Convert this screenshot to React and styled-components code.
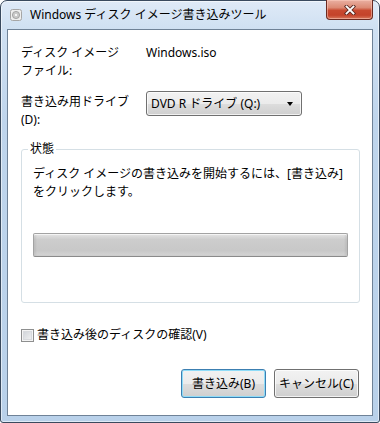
import React from 'react';
import styled, { createGlobalStyle } from 'styled-components';

const GlobalStyle = createGlobalStyle`
    html, body {
        margin: 0;
        padding: 0;
        background: #ffffff;
    }
    body {
        font-family: "Noto Sans", "Noto Sans CJK JP", sans-serif;
        font-size: 12px;
        color: #000000;
    }
`

const Window = styled.div`
    width: 380px;
    height: 423px;
    box-sizing: border-box;
    display: flex;
    flex-direction: column;
    padding: 0 6px 6px 6px;
    border: 1px solid #3a4a5e;
    border-radius: 7px 7px 3px 3px;
    background: linear-gradient(to bottom, #dfeaf7 0px, #cfe0f2 28px, #bfd5ec 120px, #b9d1ea 100%);
    box-shadow: inset 0 0 0 1px rgba(255, 255, 255, 0.55);
`

const TitleBar = styled.div`
    height: 28px;
    flex-shrink: 0;
    display: flex;
    align-items: center;
`

const TitleIcon = styled.svg`
    margin-left: 3px;
    margin-right: 8px;
    flex-shrink: 0;
`

const TitleText = styled.span`
    font-size: 12px;
    line-height: 1;
    color: #000000;
    white-space: nowrap;
`

const CloseButton = styled.div`
    margin-left: auto;
    margin-top: -1px;
    align-self: flex-start;
    width: 47px;
    height: 20px;
    box-sizing: border-box;
    display: flex;
    align-items: center;
    justify-content: center;
    border: 1px solid #6b2a20;
    border-top: none;
    border-radius: 0 0 4px 4px;
    background: linear-gradient(to bottom, #eab0a2 0%, #dc8a74 40%, #c8492f 55%, #c4432a 80%, #d8785c 100%);
    box-shadow: inset 0 0 0 1px rgba(255, 210, 195, 0.5);
`

const Client = styled.div`
    flex: 1;
    display: flex;
    flex-direction: column;
    background: #ffffff;
    border: 1px solid #6f8297;
    padding: 0 13px;
`

const Row = styled.div`
    display: grid;
    grid-template-columns: 125px 1fr;
    align-items: start;
    margin-top: ${props => props.top}px;
`

const Label = styled.div`
    line-height: 18px;
    padding-top: ${props => props.pad || 0}px;
`

const Value = styled.div`
    line-height: 18px;
`

const Combo = styled.div`
    width: 156px;
    height: 25px;
    box-sizing: border-box;
    display: flex;
    align-items: center;
    justify-content: space-between;
    padding: 0 8px 0 4px;
    border: 1px solid #707070;
    border-radius: 3px;
    background: linear-gradient(to bottom, #f2f2f2 0%, #ebebeb 50%, #dddddd 51%, #cfcfcf 100%);
    box-shadow: inset 0 0 0 1px rgba(255, 255, 255, 0.7);
    line-height: 18px;
`

const Arrow = styled.span`
    width: 0;
    height: 0;
    border-left: 3.5px solid transparent;
    border-right: 3.5px solid transparent;
    border-top: 4px solid #000000;
`

const GroupBox = styled.div`
    position: relative;
    width: 339px;
    box-sizing: border-box;
    margin-top: 20px;
    padding: 15px 11px 45px 11px;
    border: 1px solid #d5dfe5;
    border-radius: 3px;
`

const Caption = styled.span`
    position: absolute;
    top: -10px;
    left: 6px;
    padding: 0 2px;
    background: #ffffff;
    line-height: 18px;
`

const Message = styled.div`
    line-height: 18px;
`

const Progress = styled.div`
    margin-top: 32px;
    height: 24px;
    box-sizing: border-box;
    border: 1px solid #a3a3a3;
    border-bottom-color: #8a8a8a;
    border-radius: 2px;
    background: linear-gradient(to bottom, #e4e4e4 0%, #cdcdcd 25%, #c8c8c8 75%, #d4d4d4 100%);
    box-shadow: inset 0 1px 0 #f4f4f4, inset 2px 0 2px rgba(0, 0, 0, 0.06), inset -2px 0 2px rgba(0, 0, 0, 0.06);
`

const CheckRow = styled.label`
    display: flex;
    align-items: center;
    margin-top: 23px;
    line-height: 18px;
`

const CheckBox = styled.span`
    width: 13px;
    height: 13px;
    box-sizing: border-box;
    margin-right: 3px;
    border: 1px solid #8e8f8f;
    background: linear-gradient(135deg, #cbcfd5 0%, #f6f6f6 100%);
    box-shadow: inset 0 0 0 1px #f4f4f4, inset 0 0 0 2px #d8dadd;
`

const ButtonRow = styled.div`
    display: flex;
    justify-content: flex-end;
    gap: 8px;
    margin-top: 25px;
`

const Button = styled.div`
    width: 85px;
    height: 29px;
    box-sizing: border-box;
    display: flex;
    align-items: center;
    justify-content: center;
    border: 1px solid ${props => props.primary ? '#3c7fb1' : '#707070'};
    border-radius: 3px;
    background: linear-gradient(to bottom, #f2f2f2 0%, #ebebeb 50%, #dddddd 51%, #cfcfcf 100%);
    box-shadow: inset 0 0 0 1px ${props => props.primary ? '#8fdcf8' : 'rgba(255, 255, 255, 0.75)'};
    line-height: 18px;
`

const App = () => {
    return (
        <>
            <GlobalStyle />
            <Window>
                <TitleBar>
                    <TitleIcon width="12" height="12" viewBox="0 0 12 12">
                        <rect x="0.5" y="0.5" width="11" height="11" rx="2" fill="#eeeeee" stroke="#a6a6a6" />
                        <circle cx="6" cy="6" r="3.6" fill="#c9c9c9" stroke="#8f8f8f" strokeWidth="0.7" />
                        <circle cx="6" cy="6" r="1.1" fill="#ffffff" />
                    </TitleIcon>
                    <TitleText>Windows ディスク イメージ書き込みツール</TitleText>
                    <CloseButton>
                        <svg width="12" height="10" viewBox="0 0 12 10">
                            <path d="M2.5 1.5 L9.5 8.5 M9.5 1.5 L2.5 8.5" stroke="#5a2a22" strokeWidth="3.6" strokeLinecap="square" />
                            <path d="M2.5 1.5 L9.5 8.5 M9.5 1.5 L2.5 8.5" stroke="#ffffff" strokeWidth="1.8" strokeLinecap="square" />
                        </svg>
                    </CloseButton>
                </TitleBar>
                <Client>
                    <Row top={14}>
                        <Label>ディスク イメージ<br />ファイル:</Label>
                        <Value>Windows.iso</Value>
                    </Row>
                    <Row top={11}>
                        <Label pad={2}>書き込み用ドライブ<br />(D):</Label>
                        <Combo>
                            <span>DVD R ドライブ (Q:)</span>
                            <Arrow />
                        </Combo>
                    </Row>
                    <GroupBox>
                        <Caption>状態</Caption>
                        <Message>ディスク イメージの書き込みを開始するには、[書き込み]<br />をクリックします。</Message>
                        <Progress />
                    </GroupBox>
                    <CheckRow>
                        <CheckBox />
                        <span>書き込み後のディスクの確認(V)</span>
                    </CheckRow>
                    <ButtonRow>
                        <Button primary>書き込み(B)</Button>
                        <Button>キャンセル(C)</Button>
                    </ButtonRow>
                </Client>
            </Window>
        </>
    );
}

export default App;
